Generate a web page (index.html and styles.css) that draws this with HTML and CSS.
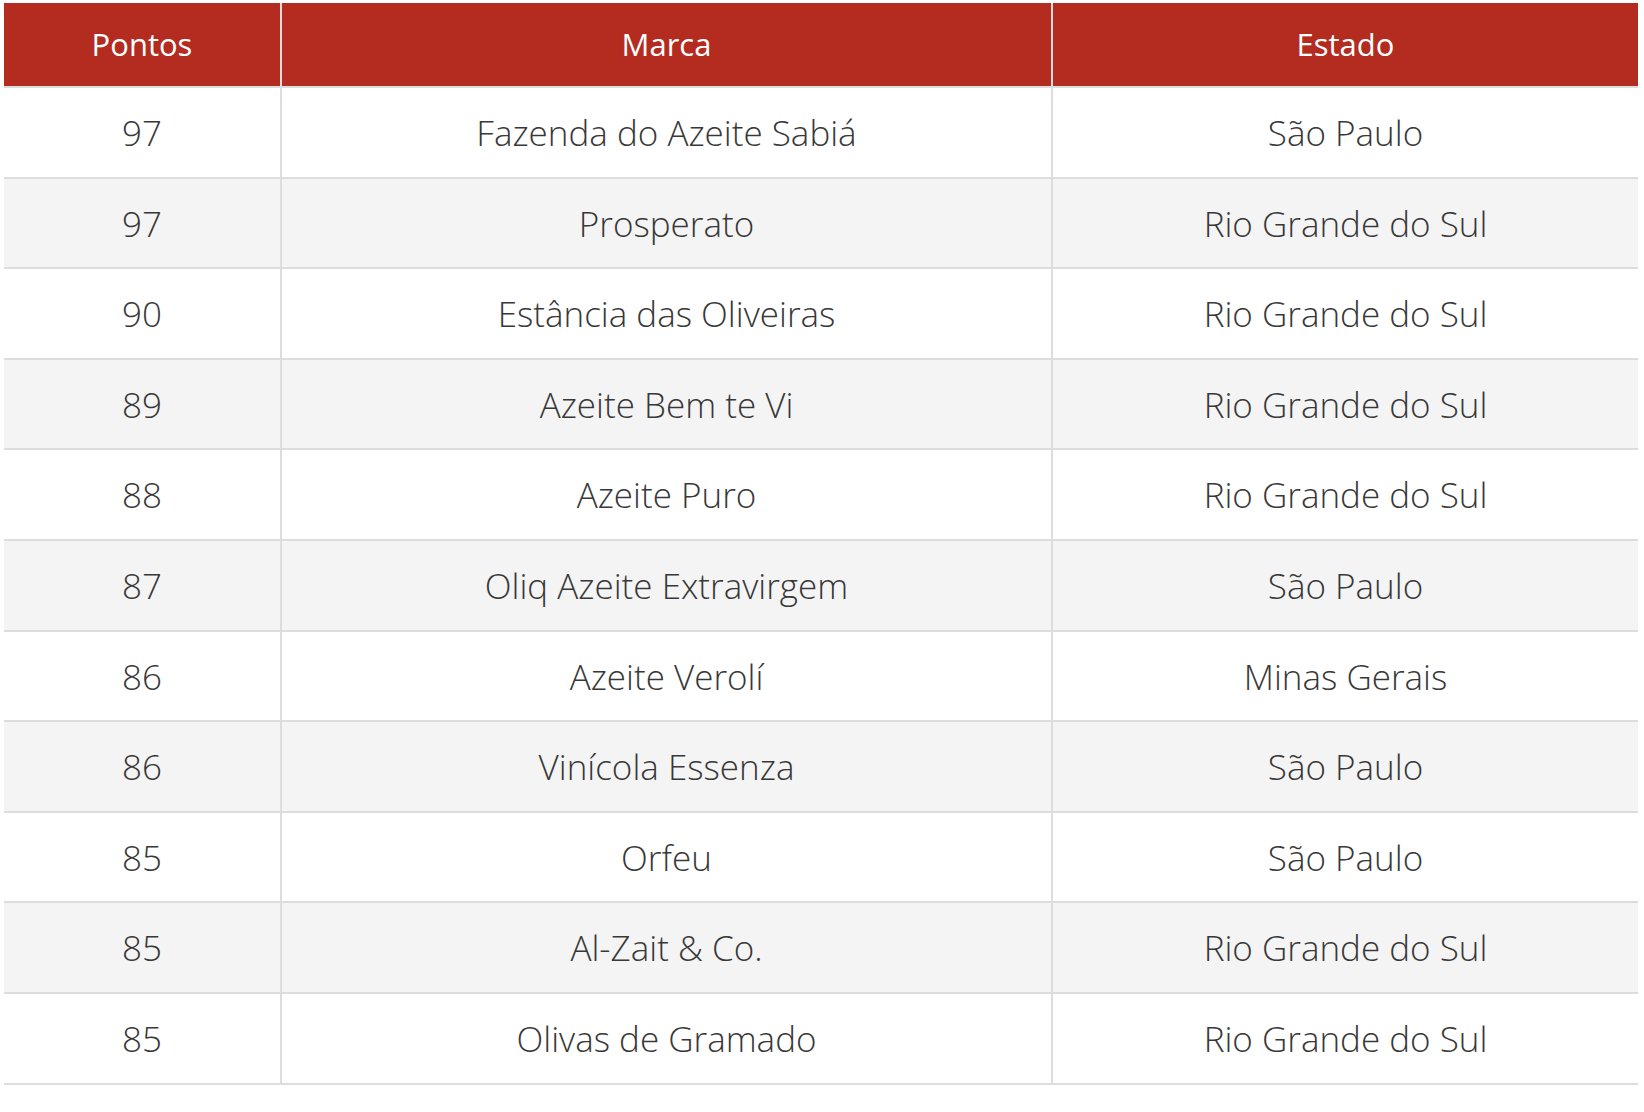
FILE: index.html
```html
<!DOCTYPE html>
<html lang="pt-BR">
<head>
<meta charset="utf-8">
<title>Ranking de azeites</title>
<link rel="stylesheet" href="styles.css">
</head>
<body>
<table class="ranking">
  <colgroup>
    <col class="col-pontos">
    <col class="col-marca">
    <col class="col-estado">
  </colgroup>
  <thead>
    <tr><th>Pontos</th><th>Marca</th><th>Estado</th></tr>
  </thead>
  <tbody>
    <tr><td>97</td><td>Fazenda do Azeite Sabiá</td><td>São Paulo</td></tr>
    <tr><td>97</td><td>Prosperato</td><td>Rio Grande do Sul</td></tr>
    <tr><td>90</td><td>Estância das Oliveiras</td><td>Rio Grande do Sul</td></tr>
    <tr><td>89</td><td>Azeite Bem te Vi</td><td>Rio Grande do Sul</td></tr>
    <tr><td>88</td><td>Azeite Puro</td><td>Rio Grande do Sul</td></tr>
    <tr><td>87</td><td>Oliq Azeite Extravirgem</td><td>São Paulo</td></tr>
    <tr><td>86</td><td>Azeite Verolí</td><td>Minas Gerais</td></tr>
    <tr><td>86</td><td>Vinícola Essenza</td><td>São Paulo</td></tr>
    <tr><td>85</td><td>Orfeu</td><td>São Paulo</td></tr>
    <tr><td>85</td><td>Al-Zait &amp; Co.</td><td>Rio Grande do Sul</td></tr>
    <tr><td>85</td><td>Olivas de Gramado</td><td>Rio Grande do Sul</td></tr>
  </tbody>
</table>
</body>
</html>
```

FILE: styles.css
```css
html, body {
  margin: 0;
  padding: 0;
  background: #ffffff;
}

body {
  padding: 3px 6px 0 4px;
  font-family: "Open Sans", "Liberation Sans", sans-serif;
}

.ranking {
  width: 1634px;
  border-collapse: separate;
  border-spacing: 0;
  table-layout: fixed;
}

.col-pontos { width: 278px; }
.col-marca { width: 771px; }
.col-estado { width: 585px; }

.ranking th,
.ranking td {
  text-align: center;
  border-bottom: 2px solid #dddddd;
  border-right: 2px solid #dddddd;
  padding: 0;
}

.ranking th:last-child,
.ranking td:last-child {
  border-right: 0;
}

.ranking th {
  background: #b42c20;
  color: #ffffff;
  font-weight: 400;
  font-size: 31px;
  line-height: 41px;
  padding-top: 21px;
  padding-bottom: 21px;
}

.ranking td {
  color: #383838;
  font-weight: 300;
  font-size: 35px;
  line-height: 50px;
  padding-top: 20px;
  padding-bottom: 18.6px;
}

.ranking tbody tr:nth-child(even) td {
  background: #f4f4f4;
}
```
